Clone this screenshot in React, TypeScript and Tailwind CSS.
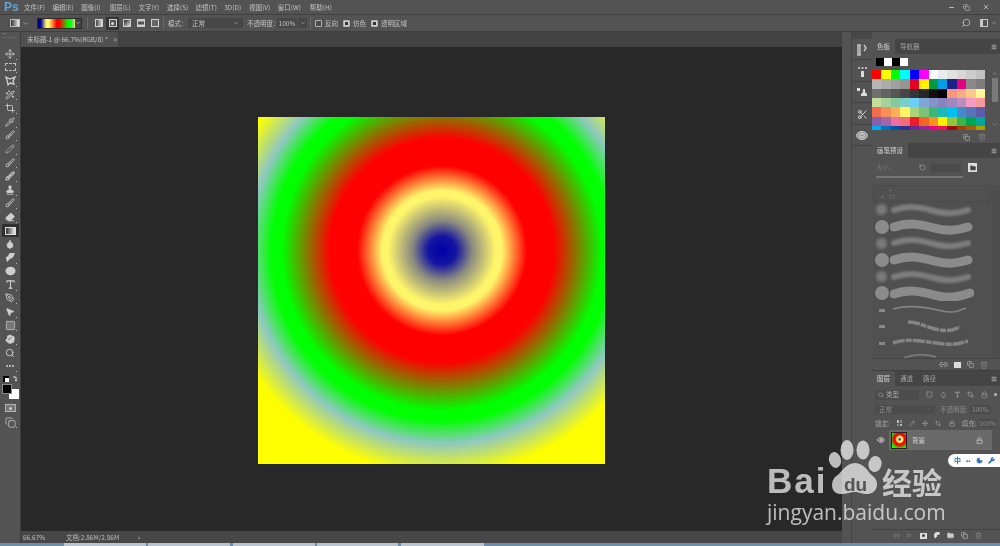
import React from "react";
import {
  Move, WandSparkles, Crop, Pipette, Brush, Pencil, Stamp, Eraser, Droplet, Hand, Search, Type,
  MousePointer2, Square, MoreHorizontal, PenTool, Eye, Lock, ChevronDown, Minus, X, Copy, Folder, Trash2, Link2,
  Move as MoveIcon, RotateCcw, Scissors, Moon, Wrench, Menu, ChevronUp,
} from "lucide-react";

const cjk = { fontFamily: '"Noto Sans CJK SC","Liberation Sans",sans-serif' };

const menus: [string, string][] = [
  ["文件(F)", "w-[28.6px]"], ["编辑(E)", "w-[28.6px]"], ["图像(I)", "w-[28.6px]"], ["图层(L)", "w-[28.6px]"], ["文字(Y)", "w-[28.6px]"],
  ["选择(S)", "w-[28.6px]"], ["滤镜(T)", "w-[28.6px]"], ["3D(D)", "w-[25px]"], ["视图(V)", "w-[28.6px]"], ["窗口(W)", "w-[32px]"], ["帮助(H)", "w-[28.6px]"],
];

const swatches = [
  "#ff0000", "#ffff00", "#00ff00", "#00ffff", "#0000ff", "#ff00ff", "#ffffff", "#ebebeb", "#e1e1e1", "#d7d7d7", "#cccccc", "#c2c2c2",
  "#b7b7b7", "#acacac", "#a0a0a0", "#959595", "#e4001e", "#fff100", "#009944", "#00a0e9", "#1d2088", "#e4007f", "#898989", "#7d7d7d",
  "#707070", "#626262", "#555555", "#464646", "#363636", "#262626", "#111111", "#000000", "#f7977a", "#f9ad81", "#fdc68a", "#fff79a",
  "#c4df9b", "#a2d39c", "#82ca9d", "#7bcdc8", "#6ecff6", "#7ea7d8", "#8493ca", "#8882be", "#a187be", "#bc8dbf", "#f49ac2", "#f6989d",
  "#f26c4f", "#f68e55", "#fbaf5c", "#fff467", "#acd372", "#7cc576", "#3bb878", "#1abbb4", "#00bff3", "#438cca", "#5574b9", "#5c5ca8",
  "#855fa8", "#a763a8", "#ee6da2", "#f16d7e", "#ed1c24", "#f26522", "#f7941d", "#fff200", "#8dc63f", "#39b54a", "#00a651", "#00a99d",
  "#00aeef", "#0072bc", "#0054a6", "#2e3192", "#662d91", "#92278f", "#ec008c", "#ed145b", "#9e0b0f", "#a0410d", "#a36209", "#aba000",
];

function Tool({ children, h = "h-[13.6px]", corner = true }: { children: React.ReactNode; h?: string; corner?: boolean }) {
  return (
    <div className={`relative flex ${h} w-full items-center justify-center text-[#cfcfcf]`}>
      {children}
      {corner && <span className="absolute bottom-[1px] right-[3px] h-[1px] w-[1px] bg-[#bdbdbd]" />}
    </div>
  );
}

function Toolbar() {
  const i = { size: 10, strokeWidth: 2 };
  return (
    <div className="flex w-[21px] shrink-0 flex-col border-r border-[#3c3c3c] bg-[#535353]">
      <div className="h-[4px] text-[4px] leading-[4px] text-[#aaa]">
        <span className="ml-[3px]">••</span>
      </div>
      <div className="mx-[2px] mt-[1px] h-[1px] bg-[#666]" />
      <div className="flex flex-col pt-[9px]">
        <Tool><Move {...i} /></Tool>
        <Tool><div className="h-[8px] w-[11px] border border-dashed border-[#bdbdbd]" /></Tool>
        <Tool><svg width="11" height="10" viewBox="0 0 11 10"><path d="M1 1 5 3 10 1 8 5 9 8 5 7 3 9 2.5 6z" fill="none" stroke="#cfcfcf" strokeWidth="1.3" /></svg></Tool>
        <Tool><WandSparkles {...i} /></Tool>
        <Tool><Crop {...i} /></Tool>
        <Tool><Pipette {...i} /></Tool>
        <Tool><Brush {...i} /></Tool>
        <Tool><Pencil {...i} strokeWidth={1.4} /></Tool>
        <Tool><Brush {...i} /></Tool>
        <Tool><Brush {...i} strokeWidth={2.6} /></Tool>
        <Tool><Stamp {...i} fill="#cfcfcf" /></Tool>
        <Tool><Brush {...i} /></Tool>
        <Tool><Eraser {...i} fill="#cfcfcf" stroke="#cfcfcf" /></Tool>
        <Tool corner={false}>
          <div className="flex h-[13px] w-[17px] items-center justify-center bg-[#2f2f2f]">
            <div className="h-[8px] w-[11px] border border-[#ddd] bg-[linear-gradient(to_right,#333,#eee)]" />
          </div>
        </Tool>
        <Tool corner={false}><Droplet {...i} fill="#cfcfcf" /></Tool>
        <Tool><svg width="11" height="11" viewBox="0 0 11 11"><path d="M10 1H4.5L3 4 .8 5.5 2 10l3-3 3-1.5z" fill="#cfcfcf" /></svg></Tool>
        <Tool corner={false}><svg width="11" height="10" viewBox="0 0 11 10"><ellipse cx="5.5" cy="5" rx="5" ry="4.2" fill="#cfcfcf" /></svg></Tool>
        <Tool><Type {...i} size={11} strokeWidth={2.4} /></Tool>
        <Tool><PenTool {...i} /></Tool>
        <Tool><MousePointer2 {...i} fill="#cfcfcf" /></Tool>
        <Tool><Square {...i} size={11} strokeWidth={1.5} fill="#777" /></Tool>
        <Tool><Hand {...i} fill="#cfcfcf" /></Tool>
        <Tool corner={false}><Search {...i} strokeWidth={2.2} /></Tool>
        <Tool><MoreHorizontal {...i} strokeWidth={3} /></Tool>
      </div>
      <div className="ml-[3px] mt-[2px] flex h-[8px] items-center gap-[3px]">
        <div className="relative h-[6px] w-[6px] bg-black"><div className="ml-[2px] mt-[2px] h-[4px] w-[4px] bg-white" /></div>
        <svg width="6" height="6" viewBox="0 0 6 6"><path d="M1 1h3v4M3 4l1 1 1-1" fill="none" stroke="#ddd" /></svg>
      </div>
      <div className="ml-[2px] mt-[1px] h-[15px] w-[17px]">
        <div className="relative h-[15px] w-[17px]">
          <div className="absolute bottom-0 right-0 h-[10px] w-[10px] bg-white" />
          <div className="absolute left-0 top-0 h-[10px] w-[10px] border border-[#888] bg-black" />
        </div>
      </div>
      <Tool h="h-[14px] mt-[2px]" corner={false}><div className="flex h-[8px] w-[11px] items-center justify-center border border-[#b5b5b5] bg-[#777]"><div className="h-[3px] w-[3px] rounded-full bg-[#ccc]" /></div></Tool>
      <Tool h="h-[14px]"><Copy size={11} strokeWidth={1.6} /></Tool>
    </div>
  );
}

function TitleBar() {
  return (
    <div className="flex h-[15px] shrink-0 items-center border-b border-[#404040] bg-[#535353] text-[#c4c4c4]">
      <span className="ml-[4px] w-[20px] text-[12px] font-bold leading-none text-[#5da7d6]" style={{ fontFamily: '"Liberation Sans",sans-serif' }}>Ps</span>
      {menus.map(([m, w]) => (
        <span key={m} className={`${w} whitespace-nowrap text-[6.5px] leading-none`} style={cjk}>{m}</span>
      ))}
      <div className="ml-auto flex items-center gap-[8px] pr-[10px] text-[#c9c9c9]">
        <Minus size={7} strokeWidth={3} />
        <Copy size={7} strokeWidth={2} />
        <X size={8} strokeWidth={2.4} className="ml-[4px]" />
      </div>
    </div>
  );
}

function Check({ on, label }: { on: boolean; label: string }) {
  return (
    <div className="flex items-center gap-[3px]">
      <div className={`flex h-[7px] w-[7px] items-center justify-center rounded-[1px] border border-[#b0b0b0] ${on ? "bg-[#cfcfcf]" : "bg-[#4a4a4a]"}`}>
        {on && <div className="h-[3px] w-[3px] bg-[#333]" />}
      </div>
      <span className="whitespace-nowrap text-[6.5px] leading-none text-[#c4c4c4]" style={cjk}>{label}</span>
    </div>
  );
}

function GradBtn({ kind, active }: { kind: string; active?: boolean }) {
  return (
    <div className={`flex h-[13px] w-[13px] items-center justify-center ${active ? "bg-[#343434]" : ""}`}>
      <div className={`relative h-[8px] w-[8px] border border-[#d0d0d0] ${kind}`}>
        {active && <div className="ml-[1.5px] mt-[1.5px] h-[3px] w-[3px] rounded-full bg-[#ddd]" />}
      </div>
    </div>
  );
}

function Options() {
  return (
    <div className="flex h-[17px] shrink-0 items-center border-b border-[#3f3f3f] bg-[#535353] text-[#c4c4c4]">
      <div className="ml-[10px] h-[8px] w-[10px] border border-[#bbb] bg-[linear-gradient(to_right,#333,#eee)]" />
      <ChevronDown size={7} className="ml-[2px]" />
      <div className="ml-[8px] flex h-[11px] w-[45px] border border-[#2c2c2c]">
        <div className="h-full w-[38px] bg-[linear-gradient(to_right,#000080_0%,#0000a0_8%,#fff56a_22%,#fff56a_30%,#ff0000_50%,#ff0000_58%,#00ff00_82%,#00ff00_88%,#8fc8c0_96%,#ffff00_100%)]" />
        <div className="flex flex-1 items-center justify-center bg-[#444]"><ChevronDown size={6} /></div>
      </div>
      <div className="ml-[5px] mr-[2px] h-[12px] w-[1px] bg-[#6a6a6a]" />
      <div className="ml-[2px] flex items-center gap-[1px]">
        <GradBtn kind="bg-[linear-gradient(to_right,#444,#ddd)]" />
        <GradBtn kind="bg-[#555]" active />
        <GradBtn kind="bg-[linear-gradient(135deg,#222,#ddd)]" />
        <GradBtn kind="bg-[linear-gradient(to_bottom,#eee,#333,#eee)]" />
        <GradBtn kind="bg-[#666]" />
      </div>
      <div className="ml-[2px] h-[12px] w-[1px] bg-[#6a6a6a]" />
      <span className="ml-[4px] w-[20px] text-[6.5px] leading-none" style={cjk}>模式：</span>
      <div className="flex h-[10px] w-[55px] items-center justify-between bg-[#474747] px-[4px]">
        <span className="text-[6.5px] leading-none" style={cjk}>正常</span>
        <ChevronDown size={6} />
      </div>
      <span className="ml-[4px] w-[30px] whitespace-nowrap text-[6.5px] leading-none" style={cjk}>不透明度：</span>
      <div className="flex h-[10px] w-[20px] items-center justify-center bg-[#474747] text-[6.5px] leading-none" style={cjk}>100%</div>
      <div className="ml-[1px] flex h-[10px] w-[9px] items-center justify-center bg-[#474747]"><ChevronDown size={6} /></div>
      <div className="ml-[3px] h-[12px] w-[1px] bg-[#6a6a6a]" />
      <div className="ml-[4px] flex items-center gap-[5px]">
        <Check on={false} label="反向" />
        <Check on label="仿色" />
        <Check on label="透明区域" />
      </div>
      <div className="ml-auto flex items-center gap-[9px] pr-[3px]">
        <Search size={10} strokeWidth={1.8} className="-scale-x-100" />
        <div className="flex items-center gap-[3px]">
          <div className="h-[8px] w-[8px] border border-[#c8c8c8] border-l-[3px]" />
          <ChevronDown size={6} />
        </div>
      </div>
    </div>
  );
}

function Centre() {
  return (
    <div className="flex min-w-0 flex-1 flex-col">
      <div className="flex h-[15px] shrink-0 bg-[#424242]">
        <div className="flex h-full w-[97px] items-center gap-[5px] bg-[#505050] pl-[6px] text-[#c4c4c4]">
          <span className="whitespace-nowrap text-[6.5px] leading-none" style={cjk}>未标题-1 @ 66.7%(RGB/8) *</span>
          <X size={6} strokeWidth={3} />
        </div>
      </div>
      <div className="flex flex-1 items-start justify-center bg-[#282828] pt-[70px]">
        <div className="h-[347px] w-[347px] bg-[radial-gradient(circle_at_184px_133.5px,#0000a8_0px,#1414a2_14px,#8a8a80_30px,#fff56a_54px,#fff56a_60px,#ff0000_85px,#ff0000_112px,#00ff00_160px,#00ff00_170px,#8fc8c0_193px,#ffff00_224px,#ffff00_400px)]" />
      </div>
      <div className="flex h-[12px] shrink-0 items-center bg-[#474747] text-[#bdbdbd]">
        <span className="ml-[2px] w-[43px] text-[6.5px] leading-none" style={cjk}>66.67%</span>
        <span className="w-[72px] whitespace-nowrap text-[6.5px] leading-none" style={cjk}>文档:2.86M/2.86M</span>
        <span className="text-[7px] leading-none">›</span>
      </div>
    </div>
  );
}

function Dock() {
  const rows = [
    <svg key="a" width="10" height="12" viewBox="0 0 10 12"><path d="M1 1h2v10H1zM7 1l2 3-2 3" fill="none" stroke="#ccc" strokeWidth="1.4" /></svg>,
    <svg key="b" width="11" height="12" viewBox="0 0 11 12"><path d="M4 5h3v6H4z" fill="#ddd" /><circle cx="2" cy="2" r="1" fill="#ddd" /><circle cx="5.5" cy="2" r="1" fill="#ddd" /><circle cx="9" cy="2" r="1" fill="#ddd" /></svg>,
    <svg key="c" width="12" height="11" viewBox="0 0 12 11"><path d="M1 1h3v3H1zM7 2h2v3l2 2v2H5V7l2-2z" fill="#ddd" /></svg>,
    <Scissors key="d" size={11} color="#ddd" strokeWidth={2} />,
    <svg key="e" width="12" height="9" viewBox="0 0 12 9"><ellipse cx="6" cy="4.5" rx="5.4" ry="4" fill="#999" stroke="#ccc" /><ellipse cx="6" cy="4.5" rx="2.5" ry="1.8" fill="none" stroke="#ddd" /></svg>,
  ];
  return (
    <div className="flex w-[21px] shrink-0 flex-col border-l border-[#444] bg-[#535353]">
      <div className="h-[7px] bg-[#484848]" />
      {rows.map((r, i) => (
        <div key={i} className="flex h-[21.4px] items-center justify-center border-b border-[#444] pt-[2px]">{r}</div>
      ))}
    </div>
  );
}

function PanelTabs({ tabs }: { tabs: string[] }) {
  return (
    <div className="flex h-[15px] shrink-0 items-stretch bg-[#454545] text-[#c4c4c4]">
      {tabs.map((t, i) => (
        <div key={t} className={`flex items-center whitespace-nowrap px-[5px] text-[6.5px] leading-none ${i === 0 ? "bg-[#535353] text-[#d4d4d4]" : "text-[#a0a0a0]"}`} style={cjk}>{t}</div>
      ))}
      <Menu size={6} strokeWidth={3} className="ml-auto mr-[3px] self-center" />
    </div>
  );
}

function SwatchPanel() {
  return (
    <div className="flex h-[104px] shrink-0 flex-col bg-[#535353]">
      <PanelTabs tabs={["色板", "导航器"]} />
      <div className="ml-[4px] mt-[4px] flex h-[8px]">
        {["#000", "#fff", "#000", "#fff"].map((c, i) => (
          <div key={i} className="h-[8px] w-[8px]" style={{ backgroundColor: c }} />
        ))}
      </div>
      <div className="flex flex-1">
        <div className="mt-[4px] grid h-[60px] w-[113px] shrink-0 grid-cols-12 auto-rows-[9.33px] overflow-hidden">
          {swatches.map((c, i) => (
            <div key={i} style={{ backgroundColor: c }} />
          ))}
        </div>
        <div className="ml-[5px] mt-[4px] flex h-[58px] w-[9px] flex-col items-center text-[#9a9a9a]">
          <ChevronUp size={7} />
          <div className="mt-[1px] h-[24px] w-[6px] bg-[#7a7a7a]" />
          <ChevronDown size={7} className="mt-auto" />
        </div>
      </div>
      <div className="flex h-[12px] items-center justify-end gap-[8px] pr-[14px] text-[#bbb]">
        <Copy size={7} strokeWidth={2} />
        <Trash2 size={8} strokeWidth={2} className="text-[#888]" />
      </div>
    </div>
  );
}

function BrushRow({ big, d }: { big: boolean; d: string }) {
  return (
    <div className="flex h-[16.7px] items-center">
      <div className="flex w-[17px] shrink-0 items-center justify-center">
        <div className={big ? "h-[14px] w-[14px] rounded-full bg-[#8b8b8b]" : "h-[11px] w-[11px] rounded-full bg-[#7a7a7a] blur-[1.5px]"} />
      </div>
      <svg width="84" height="16" viewBox="0 0 84 16" className={big ? "" : "blur-[1px]"}>
        <path d={d} fill="none" stroke={big ? "#8b8b8b" : "#7d7d7d"} strokeWidth={big ? 9 : 6} strokeLinecap="round" />
      </svg>
    </div>
  );
}

function BrushPanel() {
  const w = "M4 8C18 3 30 5 44 9S68 11 78 8";
  return (
    <div className="flex h-[227px] shrink-0 flex-col bg-[#535353]">
      <PanelTabs tabs={["画笔预设"]} />
      <div className="flex h-[15px] shrink-0 items-center pl-[4px] pt-[4px] text-[#777]">
        <span className="w-[43px] text-[6.5px] leading-none" style={cjk}>大小：</span>
        <RotateCcw size={7} strokeWidth={2.4} className="text-[#999]" />
        <div className="ml-[5px] h-[8px] w-[30px] bg-[#4a4a4a]" />
        <div className="ml-[7px] flex h-[9px] w-[9px] items-center justify-center bg-[#ddd]"><Folder size={6} color="#444" fill="#444" /></div>
      </div>
      <div className="ml-[4px] mt-[3px] h-[2px] w-[87px] shrink-0 rounded bg-[#777]" />
      <div className="flex min-h-0 flex-1 pt-[7px]">
        <div className="ml-[1px] w-[118px] overflow-hidden bg-[#505050]">
          <div className="flex h-[16.6px] flex-col border border-[#4a4a4a] pl-[7px] pt-[2px] text-[5px] leading-[6px] text-[#7a7a7a]">
            <span>·&nbsp;&nbsp;&nbsp;&nbsp;&nbsp;*</span>
            <span>4&nbsp;&nbsp;&nbsp;&nbsp;13</span>
          </div>
          <BrushRow big={false} d={w} />
          <BrushRow big d={w} />
          <BrushRow big={false} d={w} />
          <BrushRow big d={w} />
          <BrushRow big={false} d={w} />
          <BrushRow big d="M4 9C18 4 30 6 44 10S68 12 80 8" />
          {["M3 7C20 2 40 6 52 9S70 8 76 6", "M18 3C30 3 36 9 50 11S66 9 70 8", "M3 8C20 2 40 8 55 9S70 8 78 6"].map((d, i) => (
            <div key={i} className="flex h-[16.7px] items-center">
              <div className="flex w-[17px] shrink-0 justify-center"><div className="h-[3px] w-[6px] bg-[#888]" /></div>
              <svg width="84" height="16" viewBox="0 0 84 16"><path d={d} fill="none" stroke="#848484" strokeWidth={i === 0 ? 1.6 : 3.5} strokeDasharray={i === 0 ? undefined : "12 1 6 1"} /></svg>
            </div>
          ))}
          <div className="flex h-[6px] items-end"><svg width="100" height="5" viewBox="0 0 100 5" className="ml-[17px]"><path d="M14 5C24 1 36 1 46 4" fill="none" stroke="#777" strokeWidth="2" /></svg></div>
        </div>
        <div className="ml-[1px] h-full w-[8px] bg-[#4e4e4e]" />
      </div>
      <div className="flex h-[12px] shrink-0 items-center justify-end gap-[6px] border-t border-[#444] pr-[12px] text-[#bbb]">
        <Link2 size={9} strokeWidth={2} />
        <div className="h-[6px] w-[7px] bg-[#ddd]" />
        <Copy size={7} strokeWidth={2} />
        <Trash2 size={8} strokeWidth={2} className="text-[#888]" />
      </div>
    </div>
  );
}

function LayerPanel() {
  const small = "text-[6.5px] leading-none";
  return (
    <div className="flex min-h-0 flex-1 flex-col bg-[#535353]">
      <PanelTabs tabs={["图层", "通道", "路径"]} />
      <div className="mx-[3px] mt-[3px] flex h-[11px] items-center gap-[7px] text-[#a8a8a8]">
        <div className={`flex h-[10px] w-[45px] items-center gap-[2px] bg-[#4c4c4c] pl-[3px] ${small}`} style={cjk}><Search size={6} />类型</div>
        <Square size={7} strokeWidth={2} />
        <Droplet size={7} strokeWidth={2} />
        <Type size={7} strokeWidth={2.6} />
        <Crop size={7} strokeWidth={2} />
        <Lock size={7} strokeWidth={2} />
        <div className="ml-[-1px] h-[3px] w-[3px] rounded-full bg-[#bbb]" />
      </div>
      <div className="mx-[3px] mt-[5px] flex h-[9px] items-center text-[#8c8c8c]">
        <div className={`flex h-[9px] w-[60px] items-center justify-between bg-[#4c4c4c] px-[4px] ${small}`} style={cjk}>正常<ChevronDown size={5} /></div>
        <span className={`ml-[5px] whitespace-nowrap ${small}`} style={cjk}>不透明度:</span>
        <div className={`ml-[2px] flex h-[9px] w-[21px] items-center justify-center bg-[#4c4c4c] ${small}`} style={cjk}>100%</div>
      </div>
      <div className="mx-[3px] mt-[4px] flex h-[10px] items-center gap-[7px] text-[#a6a6a6]">
        <span className={`w-[15px] whitespace-nowrap ${small}`} style={cjk}>锁定:</span>
        <div className="grid h-[6px] w-[6px] grid-cols-2 grid-rows-2 gap-[1px]"><i className="bg-[#bbb]" /><i className="bg-[#888]" /><i className="bg-[#888]" /><i className="bg-[#bbb]" /></div>
        <Pencil size={7} strokeWidth={2} />
        <MoveIcon size={7} strokeWidth={2} />
        <Crop size={7} strokeWidth={2} />
        <Lock size={7} strokeWidth={2.4} />
        <span className={`whitespace-nowrap ${small}`} style={cjk}>填充:</span>
        <div className={`-ml-[5px] flex h-[9px] w-[21px] items-center justify-center bg-[#4c4c4c] text-[#8c8c8c] ${small}`} style={cjk}>100%</div>
      </div>
      <div className="mt-[2px] flex h-[20px] shrink-0 items-center">
        <div className="flex w-[17px] justify-center"><Eye size={8} color="#ddd" strokeWidth={2.6} /></div>
        <div className="flex h-full w-[103px] items-center bg-[#6a6a6a]">
          <div className="ml-[2px] h-[17px] w-[16px] border border-[#222] bg-[radial-gradient(circle_at_55%_42%,#0000a8_0px,#fff56a_2px,#fff56a_3px,#ff0000_4.5px,#ff0000_6px,#00ff00_9px,#00ff00_10px,#ffff00_14px)]" />
          <span className="ml-[5px] text-[6.5px] leading-none text-[#ddd]" style={cjk}>背景</span>
          <Lock size={7} color="#ddd" strokeWidth={2} className="ml-auto mr-[9px]" />
        </div>
      </div>
      <div className="mt-auto flex h-[14px] shrink-0 items-center gap-[6.6px] border-t border-[#444] pb-[2px] pl-[21px] text-[#ccc]">
        <Link2 size={7} className="text-[#888]" />
        <span className="w-[7px] text-[7px] italic leading-none text-[#888]" style={{ fontFamily: '"Liberation Serif",serif' }}>fx</span>
        <div className="flex h-[6px] w-[7px] items-center justify-center bg-[#ddd]"><div className="h-[3px] w-[3px] rounded-full bg-[#444]" /></div>
        <div className="h-[7px] w-[7px] rounded-full bg-[linear-gradient(135deg,#ddd_50%,#555_50%)]" />
        <Folder size={7} fill="#ccc" />
        <Copy size={7} strokeWidth={2} />
        <Trash2 size={7} strokeWidth={2} className="text-[#888]" />
      </div>
    </div>
  );
}

function Taskbar() {
  const tabs = ["w-[82px] ml-[64px]", "w-[82px] ml-[2px]", "w-[82px] ml-[3px]", "w-[81px] ml-[2px]", "w-[83px] ml-[3px]"];
  return (
    <div className="flex h-[3px] shrink-0 items-stretch bg-[#6f8ca8]">
      {tabs.map((t) => (
        <div key={t} className={`${t} bg-[#b8c4cf]`} />
      ))}
    </div>
  );
}

function Watermark() {
  return (
    <div className="pointer-events-none absolute left-[760px] top-[440px] h-[90px] w-[200px] text-[#eeeeee] opacity-75">
      <span className="absolute left-[7px] top-[21px] text-[35px] font-bold leading-[40px] tracking-[2px]" style={{ fontFamily: '"Liberation Sans",sans-serif' }}>Bai</span>
      <svg className="absolute left-[60px] top-[0px]" width="64" height="60" viewBox="0 0 64 60">
        <ellipse cx="15" cy="20" rx="6" ry="8" fill="#eeeeee" transform="rotate(-15 15 20)" />
        <ellipse cx="27" cy="10" rx="6.5" ry="10" fill="#eeeeee" />
        <ellipse cx="43" cy="10" rx="6.5" ry="9.5" fill="#eeeeee" />
        <ellipse cx="55" cy="24" rx="6.5" ry="8" fill="#eeeeee" transform="rotate(15 55 24)" />
        <path d="M35 23C45 23 48 33 54 37 60 43 57 54 47 54 41 54 39 52 35 52S27 54 21 54C11 54 10 43 15 37 22 33 25 23 35 23Z" fill="#eeeeee" />
      </svg>
      <span className="absolute left-[84px] top-[33px] text-[19px] font-bold leading-[24px] text-[#555]" style={{ fontFamily: '"Liberation Sans",sans-serif' }}>du</span>
      <span className="absolute left-[122px] top-[25px] whitespace-nowrap text-[30px] font-bold leading-[32px]" style={cjk}>经验</span>
      <span className="absolute left-[7px] top-[58px] whitespace-nowrap text-[21px] leading-[28px]" style={{ fontFamily: '"Open Sans",sans-serif' }}>jingyan.baidu.com</span>
    </div>
  );
}

function Ime() {
  return (
    <div className="absolute left-[948px] top-[454px] flex h-[13px] w-[54px] items-center gap-[5px] rounded-l-full bg-white pl-[6px] text-[#2a6fc0]">
      <span className="text-[7px] font-bold leading-none" style={cjk}>中</span>
      <span className="text-[6px] font-bold leading-none">••</span>
      <Moon size={7} fill="#2a6fc0" />
      <Wrench size={7} fill="#2a6fc0" />
    </div>
  );
}

export default function App() {
  return (
    <div className="relative flex h-[546px] w-[1000px] flex-col overflow-hidden bg-[#535353] blur-[0.35px]">
      <TitleBar />
      <Options />
      <div className="flex min-h-0 flex-1">
        <Toolbar />
        <Centre />
        <div className="w-[9px] shrink-0 bg-[#535353]" />
        <Dock />
        <div className="flex w-[128px] shrink-0 flex-col pt-[7px]">
          <SwatchPanel />
          <BrushPanel />
          <div className="h-[1px] bg-[#3f3f3f]" />
          <LayerPanel />
        </div>
      </div>
      <Taskbar />
      <Watermark />
      <Ime />
    </div>
  );
}
